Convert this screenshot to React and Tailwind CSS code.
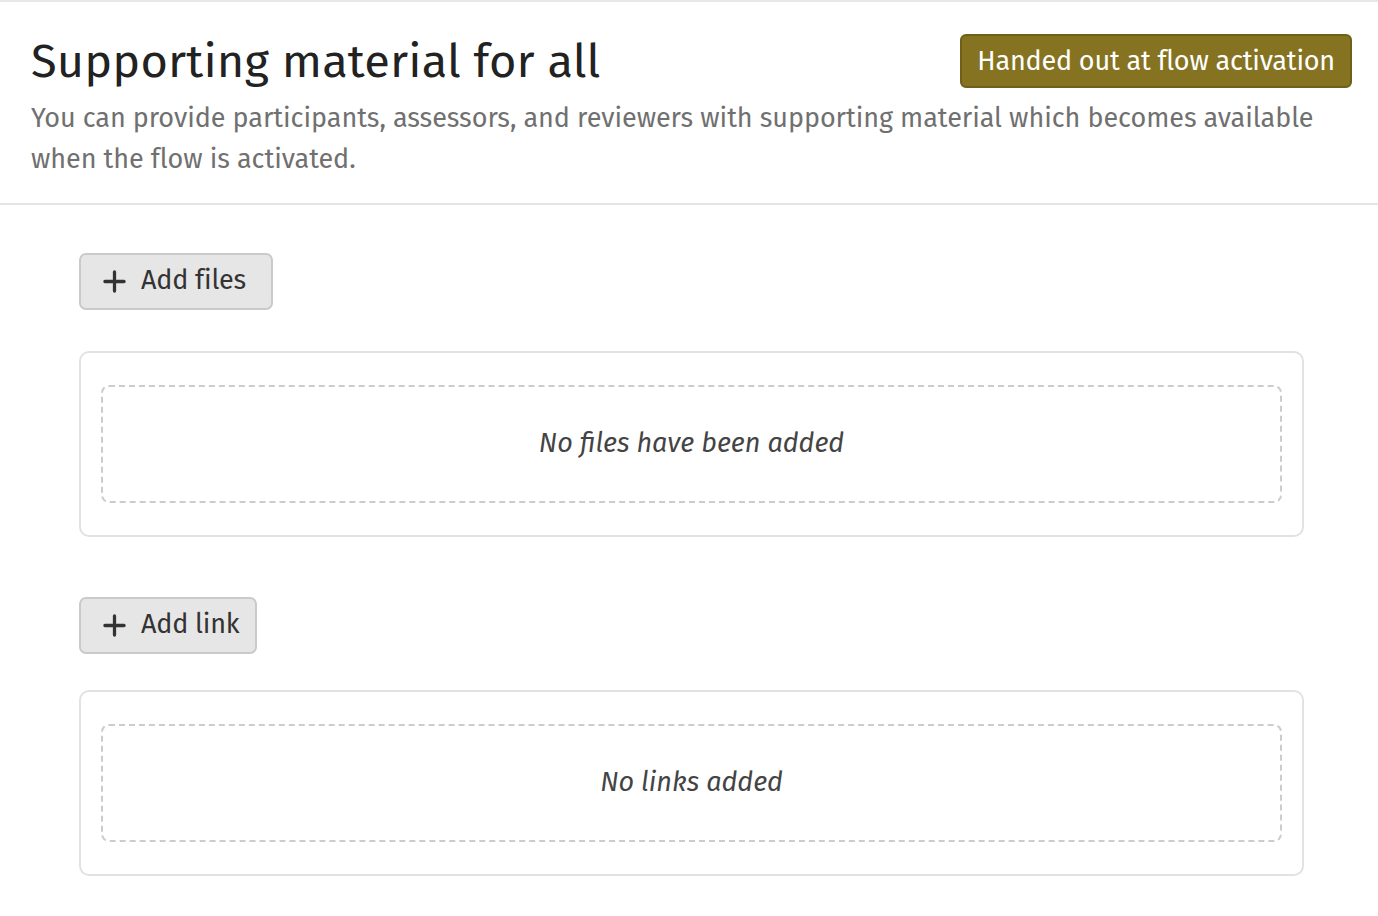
const font = { fontFamily: '"Fira Sans", Lato, "Noto Sans", sans-serif' };

function PlusIcon() {
  return (
    <svg className="w-[23px] h-[23px]" viewBox="0 0 24 24" fill="none" stroke="currentColor" strokeWidth={3.4} strokeLinecap="round">
      <path d="M12 2v20M2 12h20" />
    </svg>
  );
}

function AddButton({ label, width }) {
  return (
    <button className={`flex items-center gap-[15px] h-[57px] pl-[22px] bg-[#e6e6e6] border-2 border-[#cacaca] rounded-[7px] text-[#333] text-[27px] tracking-[-0.2px] ${width}`}>
      <PlusIcon />
      <span className="leading-none -mt-[3px]">{label}</span>
    </button>
  );
}

function EmptyCard({ text }) {
  return (
    <div className="border-2 border-[#e2e2e2] rounded-[10px] px-[20px] py-[32px]">
      <div className="border-2 border-dashed border-[#cccccc] rounded-[8px] h-[118px] flex items-center justify-center">
        <span className="italic text-[27px] text-[#444] -mt-[1px]">{text}</span>
      </div>
    </div>
  );
}

export default function App() {
  return (
    <div className="min-h-screen bg-white border-t-2 border-[#e8e8e8]" style={font}>
      <header className="border-b-2 border-[#e5e5e5] pl-[31px] pr-[26px] pt-[28px] pb-[23px]">
        <div className="flex items-start justify-between">
          <h1 className="text-[47px] leading-[62px] tracking-[0.15px] text-[#222]">Supporting material for all</h1>
          <span className="mt-[4px] h-[54px] px-[15px] flex items-center bg-[#857321] border-2 border-[#6f5f17] rounded-[6px] text-white text-[27px] tracking-[-0.2px] leading-none">
            Handed out at flow activation
          </span>
        </div>
        <p className="mt-[6px] text-[27px] tracking-[-0.05px] leading-[41px] text-[#707070]">
          You can provide participants, assessors, and reviewers with supporting material which becomes available when the flow is activated.
        </p>
      </header>
      <main className="pl-[79px] pr-[74px] pt-[48px]">
        <AddButton label="Add files" width="w-[194px]" />
        <div className="mt-[41px]">
          <EmptyCard text="No files have been added" />
        </div>
        <div className="mt-[60px]">
          <AddButton label="Add link" width="w-[178px]" />
        </div>
        <div className="mt-[36px]">
          <EmptyCard text="No links added" />
        </div>
      </main>
    </div>
  );
}
